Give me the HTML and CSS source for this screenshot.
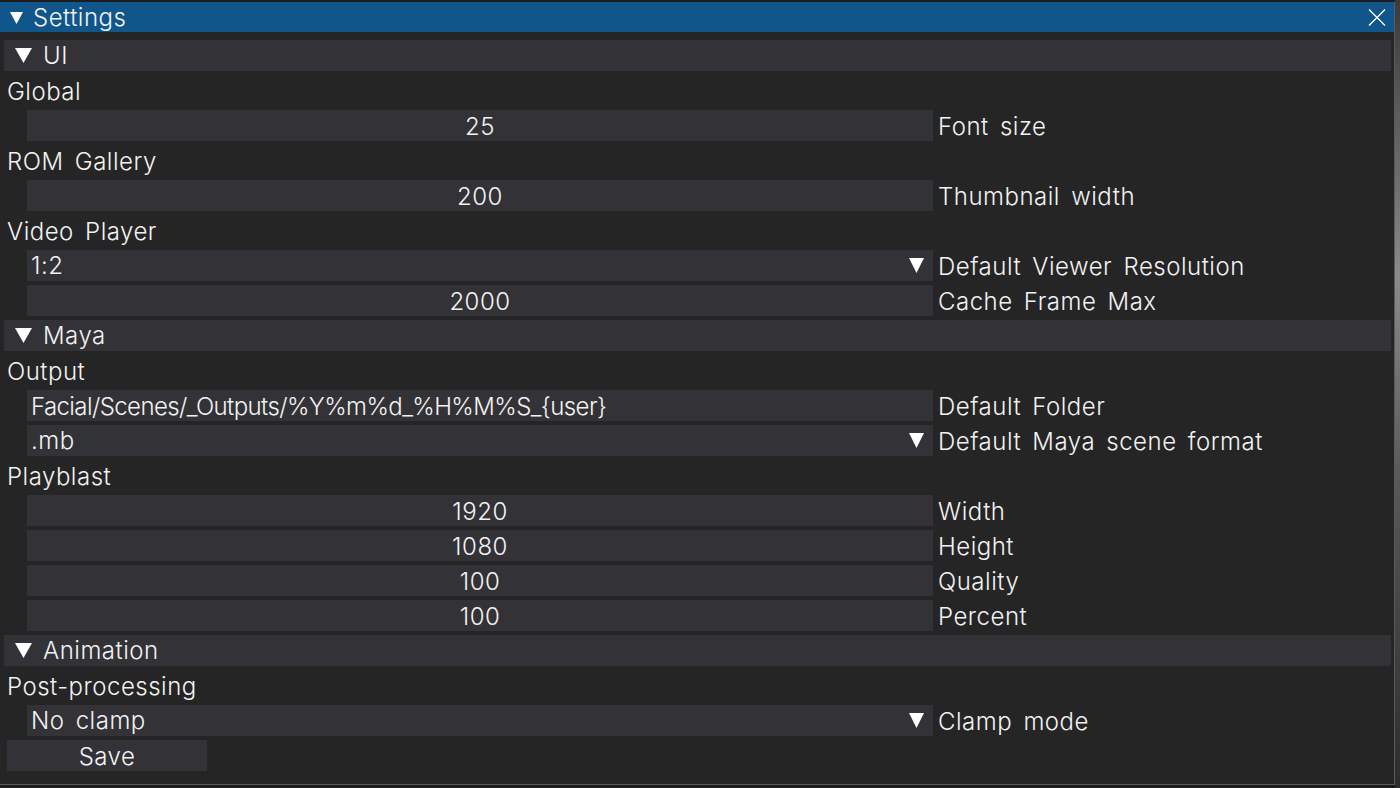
FILE: index.html
```html
<!DOCTYPE html>
<html>
<head>
<meta charset="utf-8">
<link rel="stylesheet" href="styles.css">
</head>
<body>
<div class="screen">
  <div class="window">
    <div class="titlebar">
      <svg class="tri-title" width="13" height="12" viewBox="0 0 13 12"><polygon points="0,0 13,0 6.5,12" fill="#fff"/></svg>
      <span class="title">Settings</span>
      <svg class="close" width="18" height="17" viewBox="0 0 18 17"><path d="M1 0.5 L17 16.5 M17 0.5 L1 16.5" stroke="#fff" stroke-width="1.3"/></svg>
    </div>
    <div class="content">
      <div class="header"><svg class="tri" width="17" height="15" viewBox="0 0 17 15"><polygon points="0,0 17,0 8.5,15" fill="#fff"/></svg><span>UI</span></div>
      <div class="label">Global</div>
      <div class="row"><div class="field num">25</div><div class="rlabel">Font size</div></div>
      <div class="label">ROM Gallery</div>
      <div class="row"><div class="field num">200</div><div class="rlabel">Thumbnail width</div></div>
      <div class="label">Video Player</div>
      <div class="row"><div class="field combo"><span>1:2</span><svg class="arrow" width="15" height="15" viewBox="0 0 15 15"><polygon points="0,0 15,0 7.5,15" fill="#fff"/></svg></div><div class="rlabel">Default Viewer Resolution</div></div>
      <div class="row"><div class="field num">2000</div><div class="rlabel">Cache Frame Max</div></div>
      <div class="header"><svg class="tri" width="17" height="15" viewBox="0 0 17 15"><polygon points="0,0 17,0 8.5,15" fill="#fff"/></svg><span>Maya</span></div>
      <div class="label">Output</div>
      <div class="row"><div class="field text path">Facial/Scenes/_Outputs/%Y%m%d_%H%M%S_{user}</div><div class="rlabel">Default Folder</div></div>
      <div class="row"><div class="field combo"><span>.mb</span><svg class="arrow" width="15" height="15" viewBox="0 0 15 15"><polygon points="0,0 15,0 7.5,15" fill="#fff"/></svg></div><div class="rlabel">Default Maya scene format</div></div>
      <div class="label">Playblast</div>
      <div class="row"><div class="field num">1920</div><div class="rlabel">Width</div></div>
      <div class="row"><div class="field num">1080</div><div class="rlabel">Height</div></div>
      <div class="row"><div class="field num">100</div><div class="rlabel">Quality</div></div>
      <div class="row"><div class="field num">100</div><div class="rlabel">Percent</div></div>
      <div class="header"><svg class="tri" width="17" height="15" viewBox="0 0 17 15"><polygon points="0,0 17,0 8.5,15" fill="#fff"/></svg><span>Animation</span></div>
      <div class="label">Post-processing</div>
      <div class="row"><div class="field combo"><span>No clamp</span><svg class="arrow" width="15" height="15" viewBox="0 0 15 15"><polygon points="0,0 15,0 7.5,15" fill="#fff"/></svg></div><div class="rlabel">Clamp mode</div></div>
      <div class="save-row"><div class="button">Save</div></div>
    </div>
  </div>
  <div class="side"></div>
</div>
</body>
</html>
```

FILE: styles.css
```css
html, body {
  margin: 0;
  padding: 0;
  background: #1c1c1c;
}
body {
  font-family: Inter, "Noto Sans", sans-serif;
  font-weight: 300;
  font-size: 24px;
  letter-spacing: 0.5px;
  word-spacing: 4px;
  color: #f2f2f2;
}
.screen {
  display: flex;
  width: 1400px;
  height: 788px;
  overflow: hidden;
}
.window {
  width: 1395px;
  height: 783px;
  margin-top: 2px;
  box-sizing: border-box;
  background: #252525;
  border-right: 1px solid #5a5a5a;
  border-bottom: 1px solid #5a5a5a;
  display: flex;
  flex-direction: column;
  flex-shrink: 0;
}
.side {
  flex: 1;
  background: linear-gradient(180deg, #3a3a3a 0%, #8a8a8a 35%, #5a5a5a 60%, #2c2c2c 100%);
}
.titlebar {
  height: 30px;
  background: #10568a;
  display: flex;
  align-items: center;
  padding-left: 10px;
  padding-right: 8px;
}
.tri-title {
  margin-right: 10px;
  margin-top: 1px;
}
.title {
  flex: 1;
  line-height: 33px;
}
.close {
  margin-top: 1px;
}
.content {
  padding: 8px 3px 0 4px;
  display: flex;
  flex-direction: column;
  gap: 4px;
}
.header {
  height: 31px;
  background: #323237;
  display: flex;
  align-items: center;
  padding-left: 11px;
}
.tri {
  margin-right: 11px;
  margin-top: -1px;
}
.header span {
  line-height: 33px;
}
.label {
  height: 31px;
  line-height: 33px;
  padding-left: 3px;
}
.row {
  display: flex;
  height: 31px;
  padding-left: 23px;
  gap: 5px;
}
.field {
  width: 906px;
  height: 31px;
  line-height: 33px;
  background: #323237;
  box-sizing: border-box;
  white-space: nowrap;
  flex-shrink: 0;
}
.num {
  text-align: center;
}
.text {
  padding-left: 4px;
}
.path {
  letter-spacing: -0.6px;
}
.combo {
  display: flex;
  align-items: center;
  padding-left: 4px;
  padding-right: 9px;
}
.combo span {
  flex: 1;
  line-height: 33px;
}
.rlabel {
  line-height: 33px;
  white-space: nowrap;
}
.save-row {
  display: flex;
  padding-left: 3px;
}
.button {
  width: 200px;
  height: 31px;
  line-height: 33px;
  text-align: center;
  background: #323237;
}
```
